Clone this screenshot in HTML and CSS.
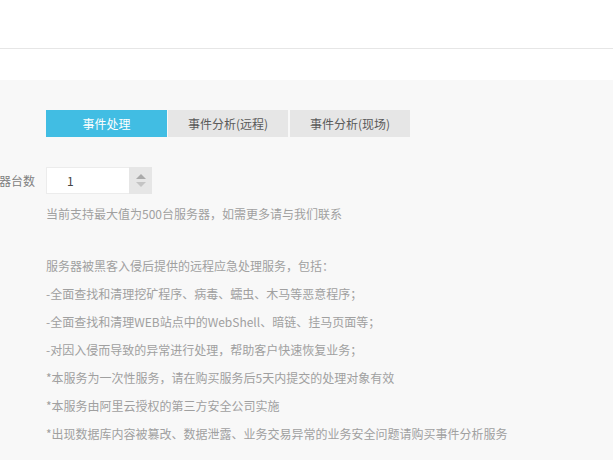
FILE: index.html
```html
<!DOCTYPE html>
<html lang="zh-CN">
<head>
<meta charset="utf-8">
<title>事件处理</title>
<link rel="stylesheet" href="styles.css">
</head>
<body>
<header class="topbar"></header>
<div class="spacer"></div>
<main class="panel">
  <div class="row">
    <div class="label-cell"></div>
    <div class="tabs">
      <div class="tab active">事件处理</div>
      <div class="tab">事件分析(远程)</div>
      <div class="tab">事件分析(现场)</div>
    </div>
  </div>
  <div class="row form-row">
    <div class="label-cell"><span class="label">服务器台数</span></div>
    <div class="field">
      <div class="number">
        <div class="number-value">1</div>
        <div class="spinner">
          <span class="arrow up"></span>
          <span class="arrow down"></span>
        </div>
      </div>
      <p class="hint">当前支持最大值为500台服务器，如需更多请与我们联系</p>
      <ul class="desc">
        <li>服务器被黑客入侵后提供的远程应急处理服务，包括：</li>
        <li>-全面查找和清理挖矿程序、病毒、蠕虫、木马等恶意程序；</li>
        <li>-全面查找和清理WEB站点中的WebShell、暗链、挂马页面等；</li>
        <li>-对因入侵而导致的异常进行处理，帮助客户快速恢复业务；</li>
        <li>*本服务为一次性服务，请在购买服务后5天内提交的处理对象有效</li>
        <li>*本服务由阿里云授权的第三方安全公司实施</li>
        <li>*出现数据库内容被篡改、数据泄露、业务交易异常的业务安全问题请购买事件分析服务</li>
      </ul>
    </div>
  </div>
</main>
</body>
</html>
```

FILE: styles.css
```css
html, body {
  margin: 0;
  padding: 0;
  background: #f8f8f8;
  font-family: "Noto Sans CJK SC", "Noto Sans", sans-serif;
  font-size: 12px;
  color: #a0a0a0;
  overflow: hidden;
}

.topbar {
  height: 48px;
  background: #fff;
  border-bottom: 1px solid #e6e6e6;
}

.spacer {
  height: 31px;
  background: #fff;
}

.panel {
  padding-top: 30px;
  background: #f8f8f8;
}

.row {
  display: grid;
  grid-template-columns: 35px 1fr;
  column-gap: 11px;
}

.label-cell {
  display: flex;
  justify-content: flex-end;
  align-items: flex-start;
}

.label {
  white-space: nowrap;
  color: #808080;
  line-height: 27px;
  font-size: 12px;
}

.tabs {
  display: flex;
}

.tab {
  width: 120px;
  height: 27px;
  line-height: 27px;
  text-align: center;
  background: #e6e6e6;
  color: #5a5a5a;
  margin-left: 1px;
}

.tab:nth-child(3) {
  margin-left: 2px;
}

.tab.active {
  width: 121px;
  margin-left: 0;
  background: #41bde3;
  color: #fff;
}

.form-row {
  margin-top: 30px;
}

.number {
  display: flex;
  width: 106px;
  height: 27px;
}

.number-value {
  flex: 1;
  background: #fff;
  border: 1px solid #ececec;
  border-right: none;
  padding-left: 20px;
  line-height: 25px;
  color: #444;
  font-size: 12px;
}

.spinner {
  width: 23px;
  background: #e6e6e6;
  display: flex;
  flex-direction: column;
  align-items: center;
  justify-content: center;
  gap: 3px;
}

.arrow {
  width: 0;
  height: 0;
  border-left: 5px solid transparent;
  border-right: 5px solid transparent;
}

.arrow.up {
  border-bottom: 5px solid #aaa;
}

.arrow.down {
  border-top: 5px solid #c4c4c4;
}

.hint {
  margin: 6px 0 0;
  line-height: 28px;
}

.desc {
  list-style: none;
  margin: 24px 0 0;
  padding: 0;
}

.desc li {
  line-height: 28px;
  white-space: nowrap;
}
```
